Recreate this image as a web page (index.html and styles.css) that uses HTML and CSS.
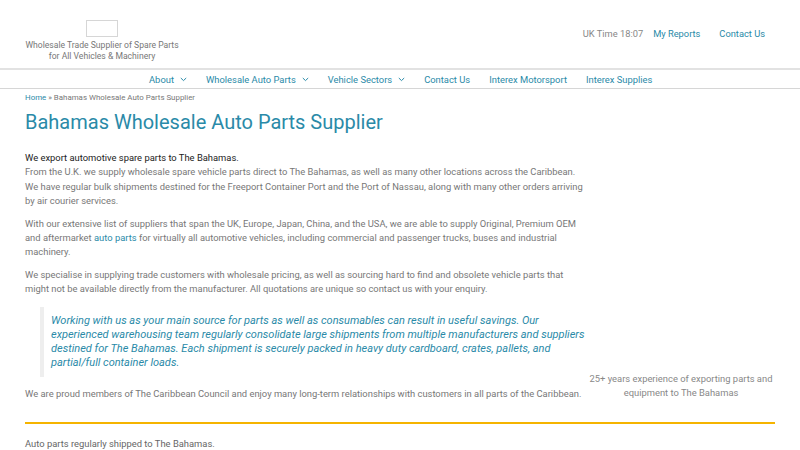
FILE: index.html
```html
<!DOCTYPE html>
<html lang="en">
<head>
<meta charset="utf-8">
<title>Bahamas Wholesale Auto Parts Supplier</title>
<link rel="stylesheet" href="styles.css">
</head>
<body>
<header class="site-header">
  <div class="brand">
    <div class="logo-box"></div>
    <p class="tagline">Wholesale Trade Supplier of Spare Parts<br>for All Vehicles &amp; Machinery</p>
  </div>
  <div class="top-links">
    <span class="uk-time">UK Time 18:07</span>
    <a href="#" class="top-link">My Reports</a>
    <a href="#" class="top-link contact">Contact Us</a>
  </div>
</header>
<nav class="main-nav">
  <ul class="nav-list">
    <li><a href="#">About <span class="caret"><svg width="7" height="5" viewBox="0 0 7 5"><path d="M0.8 1 L3.5 3.6 L6.2 1" fill="none" stroke="currentColor" stroke-width="1"/></svg></span></a></li>
    <li><a href="#">Wholesale Auto Parts <span class="caret"><svg width="7" height="5" viewBox="0 0 7 5"><path d="M0.8 1 L3.5 3.6 L6.2 1" fill="none" stroke="currentColor" stroke-width="1"/></svg></span></a></li>
    <li><a href="#">Vehicle Sectors <span class="caret"><svg width="7" height="5" viewBox="0 0 7 5"><path d="M0.8 1 L3.5 3.6 L6.2 1" fill="none" stroke="currentColor" stroke-width="1"/></svg></span></a></li>
    <li><a href="#">Contact Us</a></li>
    <li><a href="#">Interex Motorsport</a></li>
    <li><a href="#">Interex Supplies</a></li>
  </ul>
</nav>
<main class="page">
  <div class="breadcrumb"><a href="#">Home</a> » Bahamas Wholesale Auto Parts Supplier</div>
  <h1 class="title">Bahamas Wholesale Auto Parts Supplier</h1>
  <div class="content-row">
    <div class="main-col">
      <p class="lead-block"><span class="lead">We export automotive spare parts to The Bahamas.</span><br>From the U.K. we supply wholesale spare vehicle parts direct to The Bahamas, as well as many other locations across the Caribbean. We have regular bulk shipments destined for the Freeport Container Port and the Port of Nassau, along with many other orders arriving by air courier services.</p>
      <p>With our extensive list of suppliers that span the UK, Europe, Japan, China, and the USA, we are able to supply Original, Premium OEM and aftermarket <a href="#">auto parts</a> for virtually all automotive vehicles, including commercial and passenger trucks, buses and industrial machinery.</p>
      <p>We specialise in supplying trade customers with wholesale pricing, as well as sourcing hard to find and obsolete vehicle parts that might not be available directly from the manufacturer. All quotations are unique so contact us with your enquiry.</p>
      <blockquote class="quote">Working with us as your main source for parts as well as consumables can result in useful savings. Our experienced warehousing team regularly consolidate large shipments from multiple manufacturers and suppliers destined for The Bahamas. Each shipment is securely packed in heavy duty cardboard, crates, pallets, and partial/full container loads.</blockquote>
      <p class="last">We are proud members of The Caribbean Council and enjoy many long-term relationships with customers in all parts of the Caribbean.</p>
    </div>
    <aside class="side-col">
      <p class="caption">25+ years experience of exporting parts and equipment to The Bahamas</p>
    </aside>
  </div>
  <hr class="divider">
  <p class="footer-note">Auto parts regularly shipped to The Bahamas.</p>
</main>
</body>
</html>
```
FILE: styles.css
```css
* { box-sizing: border-box; }
html, body { margin: 0; padding: 0; }
body {
  font-family: Roboto, "Liberation Sans", sans-serif;
  font-size: 9.4px;
  color: #777;
  background: #fff;
  overflow: hidden;
}
a { color: #2a8aa8; text-decoration: none; }

.site-header {
  display: flex;
  justify-content: space-between;
  align-items: flex-start;
  padding: 20px 35px 0 25px;
  height: 68px;
}
.brand {
  display: flex;
  flex-direction: column;
  align-items: center;
  width: 154px;
}
.logo-box {
  width: 32px;
  height: 17px;
  border: 1px solid #d6d6d6;
}
.tagline {
  margin: 3px 0 0;
  text-align: center;
  font-size: 8.6px;
  line-height: 11px;
  color: #777;
  white-space: nowrap;
}
.top-links {
  display: flex;
  align-items: center;
  gap: 10px;
  padding-top: 8px;
  font-size: 9.3px;
  line-height: 12px;
}
.uk-time { color: #888; }
.top-link.contact { margin-left: 9px; }

.main-nav {
  border-top: 2px solid #e2e2e2;
  border-bottom: 1px solid #d6d6d6;
  height: 21px;
}
.nav-list {
  list-style: none;
  margin: 0;
  padding: 0 0 0 149px;
  display: flex;
  gap: 19px;
  height: 100%;
  align-items: center;
}
.nav-list a {
  font-size: 9.4px;
  display: flex;
  align-items: center;
}
.caret { display: inline-flex; margin-left: 6px; margin-top: 1px; }

.page { padding: 0 25px; }
.breadcrumb {
  font-size: 7.9px;
  color: #777;
  margin-top: 3px;
  line-height: 12px;
}
.title {
  font-weight: 400;
  font-size: 20px;
  color: #2a8aa8;
  margin: 5px 0 16px;
  line-height: 26px;
}
.content-row {
  display: flex;
  align-items: flex-end;
}
.main-col { width: 562px; flex: none; }
.main-col p {
  margin: 0 0 8px;
  line-height: 14.4px;
}
.lead { color: #222; }
.quote {
  margin: 10px 0 10px 15px;
  padding: 7px 0 7px 7px;
  border-left: 4px solid #eee;
  font-style: italic;
  font-size: 11px;
  line-height: 14px;
  color: #2a8aa8;
}
.main-col p.last { margin: 0; }
.side-col {
  flex: 1;
  display: flex;
  justify-content: center;
}
.caption {
  margin: 0 0 1px;
  text-align: center;
  line-height: 14px;
  color: #888;
  font-size: 9.4px;
}
.divider {
  border: 0;
  border-top: 2px solid #f5b400;
  margin: 21px 0 0;
}
.footer-note {
  margin: 13px 0 0;
  color: #666;
  line-height: 14px;
}
```
